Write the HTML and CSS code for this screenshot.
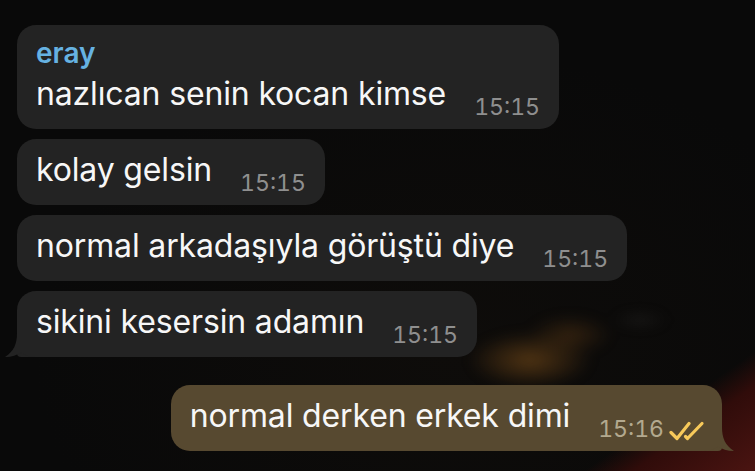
FILE: index.html
```html
<!DOCTYPE html>
<html lang="tr">
<head>
<meta charset="utf-8">
<title>Chat</title>
<link rel="stylesheet" href="styles.css">
</head>
<body>
<div class="backdrop"></div>
<div class="chat">
  <div class="bubble in has-name">
    <div class="name">eray</div>
    <div class="row">
      <span class="text">nazlıcan senin kocan kimse</span>
      <span class="time">15:15</span>
    </div>
  </div>
  <div class="bubble in">
    <div class="row">
      <span class="text">kolay gelsin</span>
      <span class="time">15:15</span>
    </div>
  </div>
  <div class="bubble in">
    <div class="row">
      <span class="text">normal arkadaşıyla görüştü diye</span>
      <span class="time">15:15</span>
    </div>
  </div>
  <div class="bubble in tailed">
    <div class="row">
      <span class="text">sikini kesersin adamın</span>
      <span class="time">15:15</span>
    </div>
    <svg class="tail tail-in" width="30" height="24" viewBox="0 0 30 24"><path d="M12 0 C12 11 9 18 0 24 C7 24 12 22 16 19.5 C20 22 24 24 30 24 L30 0 Z"/></svg>
  </div>
  <div class="bubble out tailed">
    <div class="row">
      <span class="text">normal derken erkek dimi</span>
      <span class="time">15:16</span>
      <svg class="checks" width="36" height="20" viewBox="0 0 36 20"><path d="M2 11.5 L8 17.5 L20 2.5"/><path d="M16.5 15.5 L18.5 17.5 L33 2.5"/></svg>
    </div>
    <svg class="tail tail-out" width="30" height="24" viewBox="0 0 30 24"><path d="M12 0 C12 11 9 18 0 24 C7 24 12 22 16 19.5 C20 22 24 24 30 24 L30 0 Z"/></svg>
  </div>
</div>
</body>
</html>
```
FILE: styles.css
```css
html, body {
  margin: 0;
  padding: 0;
}
body {
  position: relative;
  width: 755px;
  height: 471px;
  overflow: hidden;
  font-family: Inter, "Noto Sans", "Liberation Sans", sans-serif;
  background:
    linear-gradient(145deg, rgba(0,0,0,0) 88%, #300c0a 91.5%, #4a1411 100%),
    radial-gradient(ellipse 420px 300px at 60% 75%, #0e0c0a, #090909 100%);
}
.backdrop {
  position: absolute;
  left: 460px;
  top: 305px;
  width: 160px;
  height: 90px;
  background:
    radial-gradient(ellipse 62px 28px at 70px 55px, rgba(110, 70, 24, 0.7), rgba(110, 70, 24, 0) 100%),
    radial-gradient(ellipse 42px 20px at 110px 30px, rgba(90, 56, 20, 0.5), rgba(90, 56, 20, 0) 100%);
  filter: blur(6px);
}
.backdrop::after {
  content: "";
  position: absolute;
  left: 150px;
  top: 8px;
  width: 60px;
  height: 14px;
  background: radial-gradient(ellipse at center, rgba(90, 90, 90, 0.22), rgba(90, 90, 90, 0) 70%);
  filter: blur(3px);
}
.chat {
  position: relative;
  display: flex;
  flex-direction: column;
  align-items: flex-start;
  gap: 10px;
  padding: 25px 0 0 17px;
}
.bubble {
  position: relative;
  display: flex;
  flex-direction: column;
  border-radius: 19px;
  padding: 0 19px;
}
.bubble.in {
  background: #232323;
}
.bubble.out {
  background: #574930;
  align-self: flex-end;
  margin-right: 33px;
  margin-top: 18px;
  padding-right: 17px;
  border-bottom-right-radius: 4px;
}
.bubble.in.tailed {
  border-bottom-left-radius: 4px;
}
.name {
  padding-top: 12px;
  font-size: 28px;
  line-height: 32px;
  font-weight: 600;
  color: #66b2e2;
}
.row {
  display: flex;
  align-items: flex-end;
}
.text {
  padding: 11px 0 15px;
  font-size: 32px;
  line-height: 40px;
  letter-spacing: -0.15px;
  color: #f7f7f7;
  white-space: nowrap;
}
.has-name .text {
  padding-top: 5px;
}
.time {
  margin: 0 0 8px 28px;
  font-size: 23px;
  line-height: 28px;
  color: #8f8f8f;
  font-variant-numeric: tabular-nums;
  white-space: nowrap;
}
.out .time {
  color: #b3a98f;
  margin-left: 28px;
}
.checks {
  margin: 0 0 10px 5px;
  fill: none;
  stroke: #f7c95a;
  stroke-width: 3.2;
  stroke-linecap: round;
  stroke-linejoin: round;
}
.tail {
  position: absolute;
  bottom: 0;
}
.tail-in {
  left: -12px;
  fill: #232323;
}
.tail-out {
  right: -12px;
  fill: #574930;
  transform: scaleX(-1);
}
```
